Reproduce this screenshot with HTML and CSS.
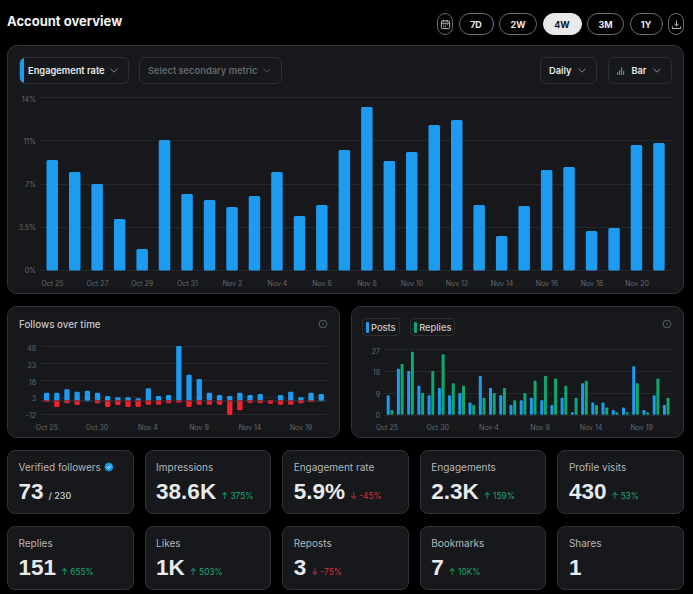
FILE: index.html
```html
<!DOCTYPE html>
<html lang="en">
<head>
<meta charset="utf-8">
<title>Account overview</title>
<link rel="stylesheet" href="styles.css">
</head>
<body>
<div class="page">
  <header class="topbar">
    <h1 class="title">Account overview</h1>
    <nav class="ranges">
      <button class="pill pill-icon"><svg class="ico" viewBox="0 0 12 12"><rect x="1.5" y="2" width="9" height="8.5" rx="1.2"/><path d="M1.5 4.6h9M4 1v2M8 1v2M3.6 6.4h1M5.6 6.4h1M7.6 6.4h1M3.6 8.2h1M5.6 8.2h1"/></svg></button>
      <button class="pill p7">7D</button>
      <button class="pill p2">2W</button>
      <button class="pill p4 active">4W</button>
      <button class="pill p3">3M</button>
      <button class="pill p1">1Y</button>
      <button class="pill pill-icon"><svg class="ico" viewBox="0 0 12 12"><path d="M6 1.5v6M3.6 5.2 6 7.6l2.4-2.4M1.5 8v2.4h9V8"/></svg></button>
    </nav>
  </header>

  <section class="card main">
    <div class="controls">
      <div class="select primary"><span class="strip"></span>Engagement rate<svg class="chev" viewBox="0 0 8 5"><path d="M.5.7 4 4.2 7.5.7"/></svg></div>
      <div class="select secondary">Select secondary metric<svg class="chev" viewBox="0 0 8 5"><path d="M.5.7 4 4.2 7.5.7"/></svg></div>
      <div class="spacer"></div>
      <div class="select daily">Daily<svg class="chev" viewBox="0 0 8 5"><path d="M.5.7 4 4.2 7.5.7"/></svg></div>
      <div class="select bar"><svg class="mini" viewBox="0 0 8 8"><path d="M.7 8V5M2.7 8V3M4.7 8V.5M6.7 8V4"/></svg>Bar<svg class="chev" viewBox="0 0 8 5"><path d="M.5.7 4 4.2 7.5.7"/></svg></div>
    </div>
    <svg class="chart chart-main" viewBox="8 84 675 209">
      <g class="grid">
        <path d="M40 97.5H672M40 140.5H672M40 184.5H672M40 227.5H672M40 270.5H672"/>
      </g>
      <g class="axis end">
        <text x="36" y="102">14%</text><text x="36" y="143.7">11%</text><text x="36" y="187.3">7%</text><text x="36" y="230.3">3.5%</text><text x="36" y="273.3">0%</text>
      </g>
      <g class="blue">
        <rect x="46.5" y="160" width="11.5" height="110.5" rx="1.5"/>
        <rect x="69" y="172" width="11.5" height="98.5" rx="1.5"/>
        <rect x="91.4" y="184" width="11.5" height="86.5" rx="1.5"/>
        <rect x="113.9" y="219" width="11.5" height="51.5" rx="1.5"/>
        <rect x="136.4" y="249" width="11.5" height="21.5" rx="1.5"/>
        <rect x="158.8" y="140" width="11.5" height="130.5" rx="1.5"/>
        <rect x="181.3" y="194" width="11.5" height="76.5" rx="1.5"/>
        <rect x="203.8" y="200" width="11.5" height="70.5" rx="1.5"/>
        <rect x="226.3" y="207" width="11.5" height="63.5" rx="1.5"/>
        <rect x="248.7" y="196" width="11.5" height="74.5" rx="1.5"/>
        <rect x="271.2" y="172" width="11.5" height="98.5" rx="1.5"/>
        <rect x="293.7" y="216" width="11.5" height="54.5" rx="1.5"/>
        <rect x="316.1" y="205" width="11.5" height="65.5" rx="1.5"/>
        <rect x="338.6" y="150" width="11.5" height="120.5" rx="1.5"/>
        <rect x="361.1" y="107" width="11.5" height="163.5" rx="1.5"/>
        <rect x="383.6" y="161" width="11.5" height="109.5" rx="1.5"/>
        <rect x="406" y="152" width="11.5" height="118.5" rx="1.5"/>
        <rect x="428.5" y="125" width="11.5" height="145.5" rx="1.5"/>
        <rect x="451" y="120" width="11.5" height="150.5" rx="1.5"/>
        <rect x="473.4" y="205" width="11.5" height="65.5" rx="1.5"/>
        <rect x="495.9" y="236" width="11.5" height="34.5" rx="1.5"/>
        <rect x="518.4" y="206" width="11.5" height="64.5" rx="1.5"/>
        <rect x="540.9" y="170" width="11.5" height="100.5" rx="1.5"/>
        <rect x="563.3" y="167" width="11.5" height="103.5" rx="1.5"/>
        <rect x="585.8" y="231" width="11.5" height="39.5" rx="1.5"/>
        <rect x="608.3" y="228" width="11.5" height="42.5" rx="1.5"/>
        <rect x="630.7" y="145" width="11.5" height="125.5" rx="1.5"/>
        <rect x="653.2" y="143" width="11.5" height="127.5" rx="1.5"/>
      </g>
      <g class="axis mid">
        <text x="52.5" y="285.5">Oct 25</text><text x="97.5" y="285.5">Oct 27</text><text x="142" y="285.5">Oct 29</text><text x="187.5" y="285.5">Oct 31</text><text x="232.5" y="285.5">Nov 2</text><text x="277.5" y="285.5">Nov 4</text><text x="322" y="285.5">Nov 6</text><text x="367" y="285.5">Nov 8</text><text x="412" y="285.5">Nov 10</text><text x="457" y="285.5">Nov 12</text><text x="502" y="285.5">Nov 14</text><text x="547" y="285.5">Nov 16</text><text x="592" y="285.5">Nov 18</text><text x="637" y="285.5">Nov 20</text>
      </g>
    </svg>
  </section>

  <div class="charts">
    <section class="card small">
      <div class="small-head">
        <h2 class="small-title">Follows over time</h2>
        <svg class="info" viewBox="0 0 10 10"><circle cx="5" cy="5" r="3.9"/><path d="M5 4.4v2.4M5 3v.7"/></svg>
      </div>
      <svg class="chart chart-small" viewBox="8 340 331 97">
        <g class="grid">
          <path d="M41 346.5H327M41 363.5H327M41 380.5H327M41 397.5H327M41 414.5H327"/>
        </g>
        <g class="axis end">
          <text x="36" y="351">48</text><text x="36" y="368">33</text><text x="36" y="384.5">18</text><text x="36" y="400.5">3</text><text x="36" y="417.5">-12</text>
        </g>
        <g class="blue">
          <rect x="44" y="392.7" width="5.3" height="8.6" rx="1.2"/>
          <rect x="54.2" y="392.7" width="5.3" height="8.6" rx="1.2"/>
          <rect x="64.3" y="389.3" width="5.3" height="12" rx="1.2"/>
          <rect x="74.5" y="391.7" width="5.3" height="9.6" rx="1.2"/>
          <rect x="84.7" y="390.7" width="5.3" height="10.6" rx="1.2"/>
          <rect x="94.9" y="392.7" width="5.3" height="8.6" rx="1.2"/>
          <rect x="105" y="396" width="5.3" height="5.3" rx="1.2"/>
          <rect x="115.2" y="397.3" width="5.3" height="4" rx="1.2"/>
          <rect x="125.4" y="397.3" width="5.3" height="4" rx="1.2"/>
          <rect x="135.5" y="398.3" width="5.3" height="3" rx="1.2"/>
          <rect x="145.7" y="388.3" width="5.3" height="13" rx="1.2"/>
          <rect x="155.9" y="396" width="5.3" height="5.3" rx="1.2"/>
          <rect x="166" y="395" width="5.3" height="6.3" rx="1.2"/>
          <rect x="176.2" y="346" width="5.3" height="55.3" rx="1.2"/>
          <rect x="186.4" y="374.7" width="5.3" height="26.6" rx="1.2"/>
          <rect x="196.6" y="379" width="5.3" height="22.3" rx="1.2"/>
          <rect x="206.7" y="392.7" width="5.3" height="8.6" rx="1.2"/>
          <rect x="216.9" y="395" width="5.3" height="6.3" rx="1.2"/>
          <rect x="227.1" y="396" width="5.3" height="5.3" rx="1.2"/>
          <rect x="237.2" y="392.7" width="5.3" height="8.6" rx="1.2"/>
          <rect x="247.4" y="395" width="5.3" height="6.3" rx="1.2"/>
          <rect x="257.6" y="394" width="5.3" height="7.3" rx="1.2"/>
          <rect x="277.9" y="395" width="5.3" height="6.3" rx="1.2"/>
          <rect x="288.1" y="391.7" width="5.3" height="9.6" rx="1.2"/>
          <rect x="298.3" y="397.3" width="5.3" height="4" rx="1.2"/>
          <rect x="308.4" y="392.7" width="5.3" height="8.6" rx="1.2"/>
          <rect x="318.6" y="394" width="5.3" height="7.3" rx="1.2"/>
        </g>
        <g class="red">
          <rect x="44" y="400" width="5.3" height="1.8" rx=".8"/>
          <rect x="54.2" y="400" width="5.3" height="7" rx="1.2"/>
          <rect x="64.3" y="400" width="5.3" height="3.3" rx="1.2"/>
          <rect x="74.5" y="400" width="5.3" height="5" rx="1.2"/>
          <rect x="94.9" y="400" width="5.3" height="3.3" rx="1.2"/>
          <rect x="105" y="400" width="5.3" height="7" rx="1.2"/>
          <rect x="115.2" y="400" width="5.3" height="5" rx="1.2"/>
          <rect x="125.4" y="400" width="5.3" height="7" rx="1.2"/>
          <rect x="135.5" y="400" width="5.3" height="7" rx="1.2"/>
          <rect x="145.7" y="400" width="5.3" height="4.7" rx="1.2"/>
          <rect x="155.9" y="400" width="5.3" height="4.7" rx="1.2"/>
          <rect x="166" y="400" width="5.3" height="3.3" rx="1.2"/>
          <rect x="176.2" y="400" width="5.3" height="2.7" rx="1.2"/>
          <rect x="186.4" y="400" width="5.3" height="7" rx="1.2"/>
          <rect x="196.6" y="400" width="5.3" height="4.7" rx="1.2"/>
          <rect x="206.7" y="400" width="5.3" height="4.7" rx="1.2"/>
          <rect x="216.9" y="400" width="5.3" height="4.7" rx="1.2"/>
          <rect x="227.1" y="400" width="5.3" height="15" rx="1.2"/>
          <rect x="237.2" y="400" width="5.3" height="10.3" rx="1.2"/>
          <rect x="247.4" y="400" width="5.3" height="3" rx="1.2"/>
          <rect x="257.6" y="400" width="5.3" height="3.3" rx="1.2"/>
          <rect x="267.7" y="400" width="5.3" height="3.7" rx="1.2"/>
          <rect x="277.9" y="400" width="5.3" height="4.7" rx="1.2"/>
          <rect x="288.1" y="400" width="5.3" height="4.7" rx="1.2"/>
          <rect x="298.3" y="400" width="5.3" height="3.3" rx="1.2"/>
          <rect x="308.4" y="400" width="5.3" height="2" rx=".8"/>
        </g>
        <path class="zero" d="M41 401H327"/>
        <g class="axis mid">
          <text x="46.7" y="429.7">Oct 25</text><text x="97" y="429.7">Oct 30</text><text x="148" y="429.7">Nov 4</text><text x="199" y="429.7">Nov 9</text><text x="250" y="429.7">Nov 14</text><text x="301" y="429.7">Nov 19</text>
        </g>
      </svg>
    </section>

    <section class="card small">
      <div class="small-head small-head-legend">
        <div class="legend">
          <span class="legend-item"><i class="key key-blue"></i>Posts</span>
          <span class="legend-item"><i class="key key-green"></i>Replies</span>
        </div>
        <svg class="info" viewBox="0 0 10 10"><circle cx="5" cy="5" r="3.9"/><path d="M5 4.4v2.4M5 3v.7"/></svg>
      </div>
      <svg class="chart chart-small" viewBox="352 340 331 97">
        <g class="grid">
          <path d="M384 349.5H672M384 371.5H672M384 393.5H672M384 415.5H672"/>
        </g>
        <g class="axis end">
          <text x="380" y="354">27</text><text x="380" y="375">18</text><text x="380" y="396.5">9</text><text x="380" y="417.5">0</text>
        </g>
        <g class="blue">
          <rect x="386.7" y="395.3" width="3" height="19.4" rx=".8"/>
          <rect x="396.9" y="368.7" width="3" height="46" rx=".8"/>
          <rect x="407.2" y="371.1" width="3" height="43.6" rx=".8"/>
          <rect x="417.4" y="385.7" width="3" height="29" rx=".8"/>
          <rect x="427.6" y="395.3" width="3" height="19.4" rx=".8"/>
          <rect x="437.9" y="388.1" width="3" height="26.6" rx=".8"/>
          <rect x="448.1" y="395.3" width="3" height="19.4" rx=".8"/>
          <rect x="458.3" y="392.9" width="3" height="21.8" rx=".8"/>
          <rect x="468.5" y="402.6" width="3" height="12.1" rx=".8"/>
          <rect x="478.8" y="376" width="3" height="38.7" rx=".8"/>
          <rect x="489" y="388.1" width="3" height="26.6" rx=".8"/>
          <rect x="499.2" y="395.3" width="3" height="19.4" rx=".8"/>
          <rect x="509.5" y="405" width="3" height="9.7" rx=".8"/>
          <rect x="519.7" y="400.2" width="3" height="14.5" rx=".8"/>
          <rect x="529.9" y="397.8" width="3" height="16.9" rx=".8"/>
          <rect x="540.2" y="400.2" width="3" height="14.5" rx=".8"/>
          <rect x="550.4" y="405" width="3" height="9.7" rx=".8"/>
          <rect x="560.6" y="397.8" width="3" height="16.9" rx=".8"/>
          <rect x="570.9" y="412.3" width="3" height="2.4" rx=".8"/>
          <rect x="581.1" y="383.2" width="3" height="31.5" rx=".8"/>
          <rect x="591.3" y="402.6" width="3" height="12.1" rx=".8"/>
          <rect x="601.5" y="402.6" width="3" height="12.1" rx=".8"/>
          <rect x="611.8" y="409.9" width="3" height="4.8" rx=".8"/>
          <rect x="622" y="407.4" width="3" height="7.3" rx=".8"/>
          <rect x="632.2" y="366.3" width="3" height="48.4" rx=".8"/>
          <rect x="642.5" y="409.9" width="3" height="4.8" rx=".8"/>
          <rect x="652.7" y="395.3" width="3" height="19.4" rx=".8"/>
          <rect x="662.9" y="405" width="3" height="9.7" rx=".8"/>
        </g>
        <g class="green">
          <rect x="390.4" y="409.9" width="3" height="4.8" rx=".8"/>
          <rect x="400.6" y="363.9" width="3" height="50.8" rx=".8"/>
          <rect x="410.9" y="351.8" width="3" height="62.9" rx=".8"/>
          <rect x="421.1" y="392.9" width="3" height="21.8" rx=".8"/>
          <rect x="431.3" y="371.1" width="3" height="43.6" rx=".8"/>
          <rect x="441.6" y="354.2" width="3" height="60.5" rx=".8"/>
          <rect x="451.8" y="383.2" width="3" height="31.5" rx=".8"/>
          <rect x="462" y="385.7" width="3" height="29" rx=".8"/>
          <rect x="472.2" y="405" width="3" height="9.7" rx=".8"/>
          <rect x="482.5" y="397.8" width="3" height="16.9" rx=".8"/>
          <rect x="492.7" y="392.9" width="3" height="21.8" rx=".8"/>
          <rect x="502.9" y="388.1" width="3" height="26.6" rx=".8"/>
          <rect x="513.2" y="400.2" width="3" height="14.5" rx=".8"/>
          <rect x="523.4" y="392.9" width="3" height="21.8" rx=".8"/>
          <rect x="533.6" y="380.8" width="3" height="33.9" rx=".8"/>
          <rect x="543.9" y="376" width="3" height="38.7" rx=".8"/>
          <rect x="554.1" y="378.4" width="3" height="36.3" rx=".8"/>
          <rect x="564.3" y="385.7" width="3" height="29" rx=".8"/>
          <rect x="574.6" y="397.8" width="3" height="16.9" rx=".8"/>
          <rect x="584.8" y="380.8" width="3" height="33.9" rx=".8"/>
          <rect x="595" y="405" width="3" height="9.7" rx=".8"/>
          <rect x="605.2" y="407.4" width="3" height="7.3" rx=".8"/>
          <rect x="615.5" y="412.3" width="3" height="2.4" rx=".8"/>
          <rect x="625.7" y="412.3" width="3" height="2.4" rx=".8"/>
          <rect x="635.9" y="383.2" width="3" height="31.5" rx=".8"/>
          <rect x="646.2" y="412.3" width="3" height="2.4" rx=".8"/>
          <rect x="656.4" y="378.4" width="3" height="36.3" rx=".8"/>
          <rect x="666.6" y="397.8" width="3" height="16.9" rx=".8"/>
        </g>
        <g class="axis mid">
          <text x="387" y="429.7">Oct 25</text><text x="437.7" y="429.7">Oct 30</text><text x="489" y="429.7">Nov 4</text><text x="540" y="429.7">Nov 9</text><text x="591" y="429.7">Nov 14</text><text x="641.7" y="429.7">Nov 19</text>
        </g>
      </svg>
    </section>
  </div>

  <div class="stats">
    <div class="stat"><div class="stat-label">Verified followers <svg class="badge" viewBox="0 0 22 22"><path class="badge-fill" d="M20.400 11c0-1.500-.9-2.700-2.100-3.300.4-1.300.2-2.800-.8-3.800s-2.500-1.300-3.800-.8C13.100 1.900 11.900 1 10.700 1 9.500 1 8.300 1.900 7.700 3.100c-1.300-.5-2.800-.2-3.800.8s-1.200 2.500-.8 3.800C1.900 8.300 1 9.500 1 11s.9 2.700 2.100 3.300c-.4 1.300-.2 2.800.8 3.800s2.500 1.300 3.800.8c.6 1.200 1.800 2.100 3.200 2.100s2.600-.9 3.200-2.100c1.300.5 2.800.2 3.800-.8s1.200-2.500.8-3.800c1.300-.6 2.200-1.800 2.200-3.300z"/><path class="badge-check" d="M7 11.200l3 3 5.200-6"/></svg></div><div class="stat-value">73<span class="of">/ 230</span></div></div>
    <div class="stat"><div class="stat-label">Impressions</div><div class="stat-value">38.6K<span class="delta up">↑ 375%</span></div></div>
    <div class="stat"><div class="stat-label">Engagement rate</div><div class="stat-value">5.9%<span class="delta down">↓ -45%</span></div></div>
    <div class="stat"><div class="stat-label">Engagements</div><div class="stat-value">2.3K<span class="delta up">↑ 159%</span></div></div>
    <div class="stat"><div class="stat-label">Profile visits</div><div class="stat-value">430<span class="delta up">↑ 53%</span></div></div>
    <div class="stat"><div class="stat-label">Replies</div><div class="stat-value">151<span class="delta up">↑ 655%</span></div></div>
    <div class="stat"><div class="stat-label">Likes</div><div class="stat-value">1K<span class="delta up">↑ 503%</span></div></div>
    <div class="stat"><div class="stat-label">Reposts</div><div class="stat-value">3<span class="delta down">↓ -75%</span></div></div>
    <div class="stat"><div class="stat-label">Bookmarks</div><div class="stat-value">7<span class="delta up">↑ 10K%</span></div></div>
    <div class="stat"><div class="stat-label">Shares</div><div class="stat-value">1</div></div>
  </div>
</div>
</body>
</html>
```
FILE: styles.css
```css
* { box-sizing: border-box; }
html, body { margin: 0; padding: 0; background: #000; }
body { font-family: "Inter", "Liberation Sans", sans-serif; color: #e7e9ea; }
.page { width: 693px; height: 594px; padding: 0 9px 0 7px; overflow: hidden; }

.topbar { height: 45px; display: flex; justify-content: space-between; align-items: flex-start; padding-top: 13px; }
.title { margin: 0; font-size: 13px; line-height: 16px; font-weight: 700; color: #eff1f2; }
.ranges { display: flex; gap: 5.5px; }
.pill { height: 22px; border: 1px solid #6a6d70; border-radius: 11px; background: #000; color: #e7e9ea; font: 700 9px/1 "Inter", sans-serif; padding: 0; display: flex; align-items: center; justify-content: center; }
.pill-icon { width: 16px; }
.p7 { width: 35px; }
.p2 { width: 38px; }
.p4 { width: 39px; }
.p3 { width: 37px; }
.p1 { width: 33px; }
.active { background: #e7e9ea; border-color: #e7e9ea; color: #0f1419; }
.ico { width: 11px; height: 11px; fill: none; stroke: #c9cbcd; stroke-width: 1; }

.card { background: #16181c; border: 1px solid #2f3236; border-radius: 10px; }
.main { height: 249px; }
.controls { display: flex; gap: 10px; padding: 11px 11px 0; height: 38px; }
.spacer { flex: 1; }
.select { height: 27px; display: flex; align-items: center; justify-content: space-between; border: 1px solid #2b2e33; border-radius: 6px; font-size: 9.3px; font-weight: 600; color: #e7e9ea; padding: 0 10px 0 8px; position: relative; overflow: hidden; }
.primary { width: 110px; padding-left: 8px; }
.strip { position: absolute; left: 0; top: 0; bottom: 0; width: 4px; background: #1d9bf0; }
.secondary { width: 143px; color: #62666b; }
.daily { width: 57px; }
.bar { width: 64px; margin-left: 1px; }
.chev { width: 8px; height: 5px; fill: none; stroke: #8b8e92; stroke-width: 1; }
.secondary .chev { stroke: #55585c; }
.mini { width: 8px; height: 8px; fill: none; stroke: #8b8e92; stroke-width: 1; }

.chart { display: block; }
.chart-main { width: 675px; height: 209px; }
.chart-small { width: 331px; height: 97px; }
.grid path { fill: none; stroke: #25272c; stroke-width: 1; }
.zero { stroke: #3d3a42; stroke-width: 1.2; opacity: .85; }
.axis text { font-family: "Inter", sans-serif; font-size: 7px; fill: #65696e; }
.end text { text-anchor: end; }
.mid text { text-anchor: middle; }
.blue rect { fill: #1d9bf0; }
.red rect { fill: #f4212e; }
.green rect { fill: #0fa86e; }

.charts { display: grid; grid-template-columns: 333px 333px; column-gap: 11px; margin-top: 12px; }
.small { height: 132px; }
.small-head { height: 33px; display: flex; justify-content: space-between; align-items: flex-start; padding: 10px 11px 0; }
.small-head-legend { padding-left: 10px; }
.small-title { margin: 0; font-size: 9.8px; line-height: 15px; font-weight: 500; color: #c4c6c8; }
.info { width: 10px; height: 10px; margin-top: 2px; fill: none; stroke: #6c7075; stroke-width: .8; }
.legend { display: flex; gap: 10.5px; margin-top: 1px; }
.legend-item { height: 18px; display: flex; align-items: center; gap: 2.5px; border: 1px solid #2b2e33; border-radius: 4px; padding: 0 3px; font-size: 9.3px; font-weight: 500; color: #c9cbcd; }
.key { display: block; width: 2.5px; height: 11px; border-radius: 1px; }
.key-blue { background: #1d9bf0; }
.key-green { background: #0fa86e; }

.stats { display: grid; grid-template-columns: repeat(5, 1fr); grid-template-rows: 64px 63.5px; gap: 12px 11px; margin-top: 12px; }
.stat { background: #16181c; border: 1px solid #2f3236; border-radius: 8px; padding: 9px 10px 0 10.5px; }
.stat-label { display: flex; align-items: center; height: 13px; font-size: 10px; color: #b4b7ba; white-space: pre; }
.badge { width: 10px; height: 10px; }
.badge-fill { fill: #1d9bf0; }
.badge-check { fill: none; stroke: #fff; stroke-width: 2.2; }
.stat-value { display: flex; align-items: baseline; margin-top: 6px; font-family: "Liberation Sans", sans-serif; font-size: 22.5px; line-height: 25px; font-weight: 700; color: #e7e9ea; }
.of { font-family: "Inter", sans-serif; font-size: 9px; font-weight: 500; margin-left: 5px; color: #d0d2d4; }
.delta { font-family: "Inter", sans-serif; font-size: 8.3px; font-weight: 400; margin-left: 5px; }
.up { color: #16a974; }
.down { color: #d8323f; }
```
